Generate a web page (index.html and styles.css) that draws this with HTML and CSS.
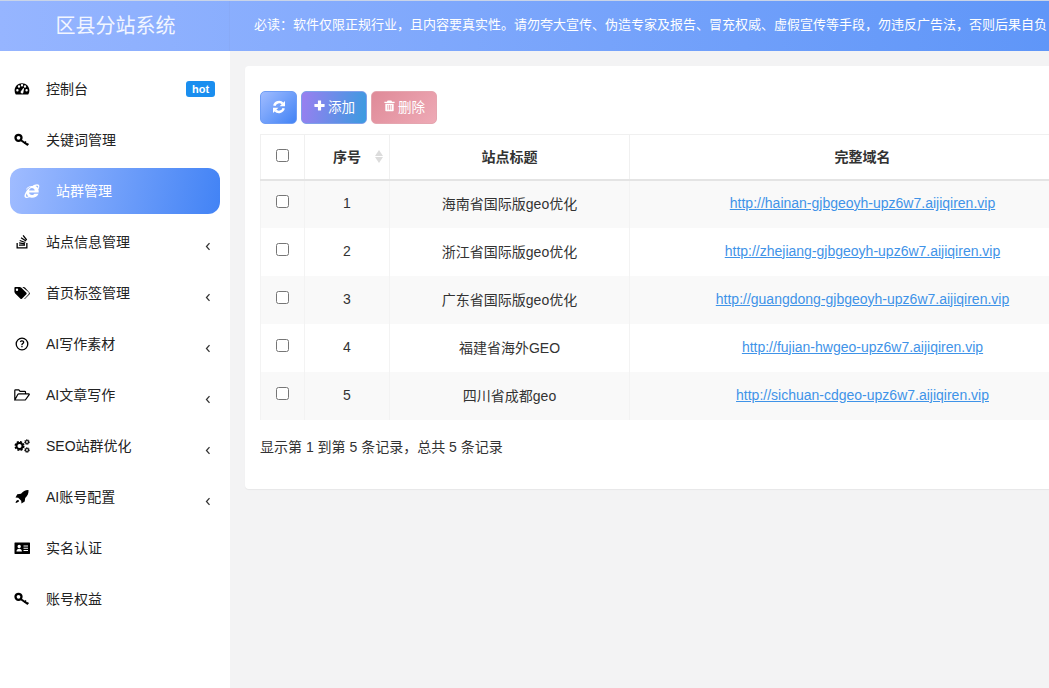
FILE: index.html
```html
<!DOCTYPE html>
<html lang="en">

<head>
    <meta charset="UTF-8">
    <meta name="viewport" content="width=device-width, initial-scale=1.0">
    <title>区县分站系统</title>
    <link rel="stylesheet" href="styles.css">
</head>

<body>
    <header class="topbar">
        <div class="logo">区县分站系统</div>
        <div class="notice">必读：软件仅限正规行业，且内容要真实性。请勿夸大宣传、伪造专家及报告、冒充权威、虚假宣传等手段，勿违反广告法，否则后果自负</div>
    </header>
    <div class="main">
        <ul class="sidebar">
            <li class="item">
                <svg class="icon" viewBox="0 0 16 16"><path fill-rule="evenodd" d="M8 2.200C3.800 2.200.6 5.400.6 9.400c0 1.500.4 2.900 1.200 4.100h12.400c.8-1.200 1.200-2.600 1.200-4.100 0-4-3.200-7.200-7.400-7.200zM3.400 10.400a1.200 1.200 0 1 1 0-2.400 1.200 1.200 0 0 1 0 2.400zm1.600-3.700a1.200 1.200 0 1 1 0-2.400 1.200 1.200 0 0 1 0 2.400zm3-1.300a1.200 1.200 0 1 1 0-2.400 1.200 1.200 0 0 1 0 2.400zm3 1.300a1.200 1.200 0 1 1 0-2.400 1.200 1.200 0 0 1 0 2.400zm-1.800 5.200a1.500 1.500 0 0 1-2.600-1.200l2.700-3.600.8.400zm3.400-1.500a1.200 1.200 0 1 1 0-2.400 1.200 1.200 0 0 1 0 2.400z"/></svg>
                <span class="label">控制台</span>
                <span class="hot">hot</span>
            </li>
            <li class="item">
                <svg class="icon" viewBox="0 0 16 16"><circle cx="4.500" cy="5.800" r="3" fill="none" stroke="#000" stroke-width="2.300"/><path d="M6.600 8 13.800 13" fill="none" stroke="#000" stroke-width="2.100"/><path d="M9.800 11l1.500-2 1.300.9-1.500 2zM12.300 12.800l1.300-1.700 1.400 1-1.300 1.700z"/></svg>
                <span class="label">关键词管理</span>
            </li>
            <li class="item active">
                <svg class="icon" viewBox="0 0 16 16"><path d="M8.500 2.900c1.500-1 4.700-2.500 6.300-1.100 1 1 .5 3-.5 4.800.3.700.4 1.400.4 2.100v.9H5.100c0 1.500 1.300 2.500 2.800 2.500 1.100 0 2-.5 2.500-1.400h4.100c-.9 2.500-3.400 4.100-6.600 4.100-.9 0-1.900-.2-2.700-.5-1.400.7-3.200 1.200-4.200.3-1.100-1.100-.5-3.300.9-5.700C3 7.100 4.900 5 7.200 3.500 5 4 3 5.600 2 7.200 2.300 4.500 5 2.700 8.500 2.900zM5.100 7.400h5.600c-.1-1.300-1.300-2.300-2.800-2.300s-2.700 1-2.800 2.300zM12.300 3.500c.8.400 1.300 1 1.700 1.600.3-.9.300-1.700-.2-2.200-.5-.4-1.300-.3-2.300.2zM2.700 10.500c-.7 1.400-.9 2.500-.4 3 .4.400 1.200.3 2.100-.1-.8-.7-1.400-1.700-1.700-2.900z"/></svg>
                <span class="label">站群管理</span>
            </li>
            <li class="item">
                <svg class="icon" viewBox="0 0 16 16"><path d="M2.500 9h1.300v4.200h8.400V9h1.300v5.500h-11zM5 10.500l6 .1v1.200l-6-.1zM5.200 8.300l5.900.9-.2 1.200-5.900-.9zM5.900 5.900l5.600 2-.4 1.100-5.600-2zM7.400 3.300l5 3.300-.7 1-5-3.300zM9.600 1l3.600 4.600-1 .8-3.600-4.600z"/></svg>
                <span class="label">站点信息管理</span>
                <svg class="caret" viewBox="0 0 8 12"><path d="M6 1.500 2 6l4 4.500" /></svg>
            </li>
            <li class="item">
                <svg class="icon" viewBox="0 0 16 16"><path fill-rule="evenodd" d="M.4 2.800c0-.5.4-.9.900-.9h4.300c.5 0 1.100.3 1.500.6l5.300 5.300c.4.400.4 1 0 1.400l-4.500 4.500c-.4.400-1 .4-1.400 0L1.200 8.400C.8 8 .4 7.300.4 6.800zM3 3.500a1.200 1.200 0 1 0 0 2.400 1.200 1.200 0 0 0 0-2.400z"/><path d="M8.300 1.900h1.200c.5 0 1.100.3 1.500.6l4.600 5.300c.4.400.4 1 0 1.400l-4.500 4.500c-.3.300-.7.300-1 .2l4.300-4.500c.7-.8.700-1.700 0-2.400z"/></svg>
                <span class="label">首页标签管理</span>
                <svg class="caret" viewBox="0 0 8 12"><path d="M6 1.500 2 6l4 4.500" /></svg>
            </li>
            <li class="item">
                <svg class="icon" viewBox="0 0 16 16"><circle cx="8" cy="8" r="5.800" fill="none" stroke="#000" stroke-width="1.300"/><path d="M7.300 9.300V8.700c0-1.500 1.700-1.500 1.700-2.500 0-.5-.5-.8-1-.8-.6 0-1 .3-1.400.8l-.8-.6C6.400 4.800 7.100 4.300 8.100 4.300c1.200 0 2.200.7 2.200 1.900 0 1.700-1.800 1.700-1.800 2.800v.3zM7.300 10h1.300v1.300H7.300z"/></svg>
                <span class="label">AI写作素材</span>
                <svg class="caret" viewBox="0 0 8 12"><path d="M6 1.500 2 6l4 4.500" /></svg>
            </li>
            <li class="item">
                <svg class="icon" viewBox="0 0 16 16"><path fill="none" stroke="#000" stroke-width="1.200" d="M.8 13V3.600c0-.5.300-.8.800-.8h3.200l1.300 1.500h4.600c.5 0 .8.300.8.800v1.500M.8 13h10.500l3.900-5.400c.2-.4 0-.8-.4-.8H4.800c-.4 0-.7.200-.9.500z"/></svg>
                <span class="label">AI文章写作</span>
                <svg class="caret" viewBox="0 0 8 12"><path d="M6 1.500 2 6l4 4.500" /></svg>
            </li>
            <li class="item">
                <svg class="icon" viewBox="0 0 16 16"><circle cx="5.500" cy="8" r="3" fill="none" stroke="#000" stroke-width="1.900"/><circle cx="5.500" cy="8" r="4.300" fill="none" stroke="#000" stroke-width="1.500" stroke-dasharray="2.100 1.280"/><circle cx="13" cy="4" r="1.500" fill="none" stroke="#000" stroke-width="1.200"/><circle cx="13" cy="4" r="2.400" fill="none" stroke="#000" stroke-width=".9" stroke-dasharray="1.200 .68"/><circle cx="13" cy="12" r="1.500" fill="none" stroke="#000" stroke-width="1.200"/><circle cx="13" cy="12" r="2.400" fill="none" stroke="#000" stroke-width=".9" stroke-dasharray="1.200 .68"/></svg>
                <span class="label">SEO站群优化</span>
                <svg class="caret" viewBox="0 0 8 12"><path d="M6 1.500 2 6l4 4.500" /></svg>
            </li>
            <li class="item">
                <svg class="icon" viewBox="0 0 16 16"><path d="M14.500 1c.3 3.200-.9 6-3.300 8l-.5 3.600-3.200 1.900-.3-2.700-3-3-2.700-.4 1.800-3.200 3.700-.4C9 2.200 11.700.8 14.500 1zM3.800 11c.7 0 1.300.6 1.300 1.300-.6.900-2 1.400-3.500 1.700.2-1.400.7-2.700 2.200-3z"/></svg>
                <span class="label">AI账号配置</span>
                <svg class="caret" viewBox="0 0 8 12"><path d="M6 1.500 2 6l4 4.500" /></svg>
            </li>
            <li class="item">
                <svg class="icon" viewBox="0 0 16 16"><path fill-rule="evenodd" d="M1 2.500h14.500c.3 0 .5.200.5.500v10.500c0 .3-.2.500-.5.500H1c-.3 0-.5-.200-.5-.5V3c0-.3.200-.5.500-.5zM5.200 4.800a1.700 1.700 0 1 0 0 3.400 1.700 1.700 0 0 0 0-3.400zM2.500 11.500h5.400c0-1.700-1-2.700-2.700-2.700s-2.700 1-2.700 2.700zM9.500 5.500v1.100h4.500V5.500zM9.500 7.700v1.100h4.500V7.700zM9.500 9.900V11h4.500V9.900z"/></svg>
                <span class="label">实名认证</span>
            </li>
            <li class="item">
                <svg class="icon" viewBox="0 0 16 16"><circle cx="4.500" cy="5.800" r="3" fill="none" stroke="#000" stroke-width="2.300"/><path d="M6.600 8 13.800 13" fill="none" stroke="#000" stroke-width="2.100"/><path d="M9.800 11l1.500-2 1.300.9-1.500 2zM12.300 12.800l1.300-1.700 1.400 1-1.300 1.700z"/></svg>
                <span class="label">账号权益</span>
            </li>
        </ul>
        <div class="content">
            <div class="card">
                <div class="toolbar">
                    <button class="btn btnRefresh"><svg class="btnIcon" viewBox="0 0 14 14"><path d="M2.300 5.800A5 5 0 0 1 10.700 3.600M11.700 8.200A5 5 0 0 1 3.300 10.400" fill="none" stroke="#fff" stroke-width="2.500"/><path d="M13 .9V6.300H7.600zM1 13.100V7.700h5.400z"/></svg></button>
                    <button class="btn btnAdd"><svg class="btnIcon" viewBox="0 0 14 14"><path d="M5.200 1.500h2.600c.2 0 .4.200.4.400V5.500h3.400c.2 0 .4.200.4.400v2.200c0 .2-.2.400-.4.400H8.200v3.600c0 .2-.2.400-.4.400H5.200c-.2 0-.4-.2-.4-.4V8.500H1.400c-.2 0-.4-.2-.4-.4V5.900c0-.2.200-.4.400-.4h3.400V1.900c0-.2.200-.4.400-.4z" transform="translate(.5 0)"/></svg>添加</button>
                    <button class="btn btnDel"><svg class="btnIcon" viewBox="0 0 14 14"><path fill-rule="evenodd" d="M5 1.500h4l.8 1.500H12.500v1.200h-11V3h2.700zM2.500 5h9v7.500c0 .4-.3.7-.7.700H3.200c-.4 0-.7-.3-.7-.7zM4.800 6.500v5h.8v-5zM6.600 6.500v5h.8v-5zM8.400 6.500v5h.8v-5z"/></svg>删除</button>
                </div>
                <div class="tableWrap">
                    <table class="dataTable">
                        <thead>
                            <tr>
                                <th class="colCheck"><input type="checkbox"></th>
                                <th class="colNum">序号<span class="sort"><i class="sortUp"></i><i class="sortDown"></i></span></th>
                                <th class="colTitle">站点标题</th>
                                <th class="colDomain">完整域名</th>
                            </tr>
                        </thead>
                        <tbody>
                            <tr>
                                <td><input type="checkbox"></td>
                                <td>1</td>
                                <td>海南省国际版geo优化</td>
                                <td><a href="#">http://hainan-gjbgeoyh-upz6w7.aijiqiren.vip</a></td>
                            </tr>
                            <tr>
                                <td><input type="checkbox"></td>
                                <td>2</td>
                                <td>浙江省国际版geo优化</td>
                                <td><a href="#">http://zhejiang-gjbgeoyh-upz6w7.aijiqiren.vip</a></td>
                            </tr>
                            <tr>
                                <td><input type="checkbox"></td>
                                <td>3</td>
                                <td>广东省国际版geo优化</td>
                                <td><a href="#">http://guangdong-gjbgeoyh-upz6w7.aijiqiren.vip</a></td>
                            </tr>
                            <tr>
                                <td><input type="checkbox"></td>
                                <td>4</td>
                                <td>福建省海外GEO</td>
                                <td><a href="#">http://fujian-hwgeo-upz6w7.aijiqiren.vip</a></td>
                            </tr>
                            <tr>
                                <td><input type="checkbox"></td>
                                <td>5</td>
                                <td>四川省成都geo</td>
                                <td><a href="#">http://sichuan-cdgeo-upz6w7.aijiqiren.vip</a></td>
                            </tr>
                        </tbody>
                    </table>
                </div>
                <div class="pageInfo">显示第 1 到第 5 条记录，总共 5 条记录</div>
            </div>
        </div>
    </div>
</body>

</html>
```

FILE: styles.css
```css
* {
    padding: 0;
    margin: 0;
    box-sizing: border-box;
    list-style: none;
}

html,
body {
    height: 100%;
    overflow: hidden;
}

body {
    font-family: "Liberation Sans", "Noto Sans CJK SC", sans-serif;
    font-size: 14px;
    color: #333;
    background-color: #f3f3f4;
}

.topbar {
    display: flex;
    height: 51px;
    border-top: 1px solid #c9d4e8;
    color: #fff;
    background: linear-gradient(90deg, #96b5ff, #5f96f8);
}

.topbar .logo {
    flex: 0 0 230px;
    height: 50px;
    padding-left: 2px;
    font-size: 20px;
    line-height: 50px;
    text-align: center;
    border-right: 1px solid rgba(130, 160, 230, 0.25);
    color: #f2f6ff;
}

.topbar .notice {
    flex: 1;
    padding-left: 24px;
    font-size: 13px;
    line-height: 48px;
    white-space: nowrap;
    overflow: hidden;
}

.main {
    display: flex;
    height: 637px;
}

.sidebar {
    flex: 0 0 230px;
    padding: 15px 10px 0;
    background-color: #fff;
}

.sidebar .item {
    display: flex;
    align-items: center;
    height: 46px;
    margin-bottom: 5px;
    padding: 0 4px;
    color: #222;
    border-radius: 12px;
}

.sidebar .icon {
    flex: none;
    width: 16px;
    height: 16px;
    margin-right: 16px;
}

.sidebar .label {
    flex: 1;
    padding-bottom: 2px;
}

.sidebar .hot {
    width: 29px;
    height: 16px;
    margin-right: 1px;
    font-size: 11px;
    font-weight: bold;
    line-height: 16px;
    text-align: center;
    color: #fff;
    background-color: #1a8eef;
    border-radius: 3px;
}

.sidebar .caret {
    width: 6px;
    height: 9px;
    margin-right: 5px;
    position: relative;
    top: 4px;
    fill: none;
    stroke: #333;
    stroke-width: 1.7;
}

.sidebar .active {
    padding-left: 14px;
    color: #fff;
    background: linear-gradient(100deg, #a0bcff, #4283f5);
}

.sidebar .active .icon {
    fill: #fff;
}

.content {
    flex: 1;
    min-width: 0;
    padding: 15px 0 0 15px;
    overflow: hidden;
}

.card {
    width: 900px;
    height: 423px;
    padding: 25px 15px 0;
    background-color: #fff;
    border-radius: 4px;
    box-shadow: 0 1px 1px rgba(0, 0, 0, 0.05);
}

.toolbar {
    display: flex;
    gap: 4px;
    height: 33px;
}

.btn {
    display: flex;
    align-items: center;
    justify-content: center;
    height: 33px;
    padding-bottom: 4px;
    font-family: inherit;
    font-size: 13.5px;
    color: #fff;
    border: 1px solid transparent;
    border-radius: 5px;
}

.btnIcon {
    width: 13px;
    height: 13px;
    margin-right: 2px;
    fill: #fff;
}

.btnRefresh {
    width: 37px;
    padding-bottom: 2px;
    border-color: #6f9df5;
    background: linear-gradient(135deg, #a0bcff, #4283f5);
}

.btnRefresh .btnIcon {
    width: 14px;
    height: 14px;
    margin-right: 0;
}

.btnAdd {
    width: 66px;
    border-color: #7fa0ea;
    background: linear-gradient(100deg, #9a7ff0, #3a9be0);
}

.btnDel {
    width: 66px;
    border-color: #e5a5af;
    background: linear-gradient(135deg, #df8a98, #eeaab6);
}

.tableWrap {
    margin-top: 10px;
}

.dataTable {
    width: 836px;
    table-layout: fixed;
    border-collapse: collapse;
    font-size: 14px;
}

.dataTable th {
    height: 45px;
    padding-bottom: 2px;
    font-weight: bold;
    text-align: center;
    color: #333;
    border: 1px solid #f0f0f0;
    border-bottom: 2px solid #e4e4e4;
}

.dataTable td {
    height: 48px;
    padding-bottom: 2px;
    text-align: center;
    border-right: 1px solid #f3f3f3;
}

.dataTable td:first-child {
    border-left: 1px solid #f3f3f3;
}

.dataTable tbody tr:nth-child(odd) {
    background-color: #f9f9f9;
}

.dataTable input {
    display: block;
    width: 13px;
    height: 13px;
    margin: -3px auto 0 15px;
}

.dataTable th input {
    margin-top: -1px;
}

.dataTable a {
    color: #3f93e8;
}

.colCheck {
    width: 44px;
}

.colNum {
    width: 85px;
    position: relative;
}

.colTitle {
    width: 240px;
}

.sort {
    position: absolute;
    right: 6px;
    top: 15px;
    width: 8px;
}

.sort i {
    display: block;
    width: 0;
    height: 0;
    margin-bottom: 1px;
    border-left: 4px solid transparent;
    border-right: 4px solid transparent;
}

.sortUp {
    border-bottom: 6px solid #dcdcdc;
}

.sortDown {
    border-top: 6px solid #dcdcdc;
}

.pageInfo {
    margin-top: 19px;
    line-height: 16px;
    color: #333;
}
```
